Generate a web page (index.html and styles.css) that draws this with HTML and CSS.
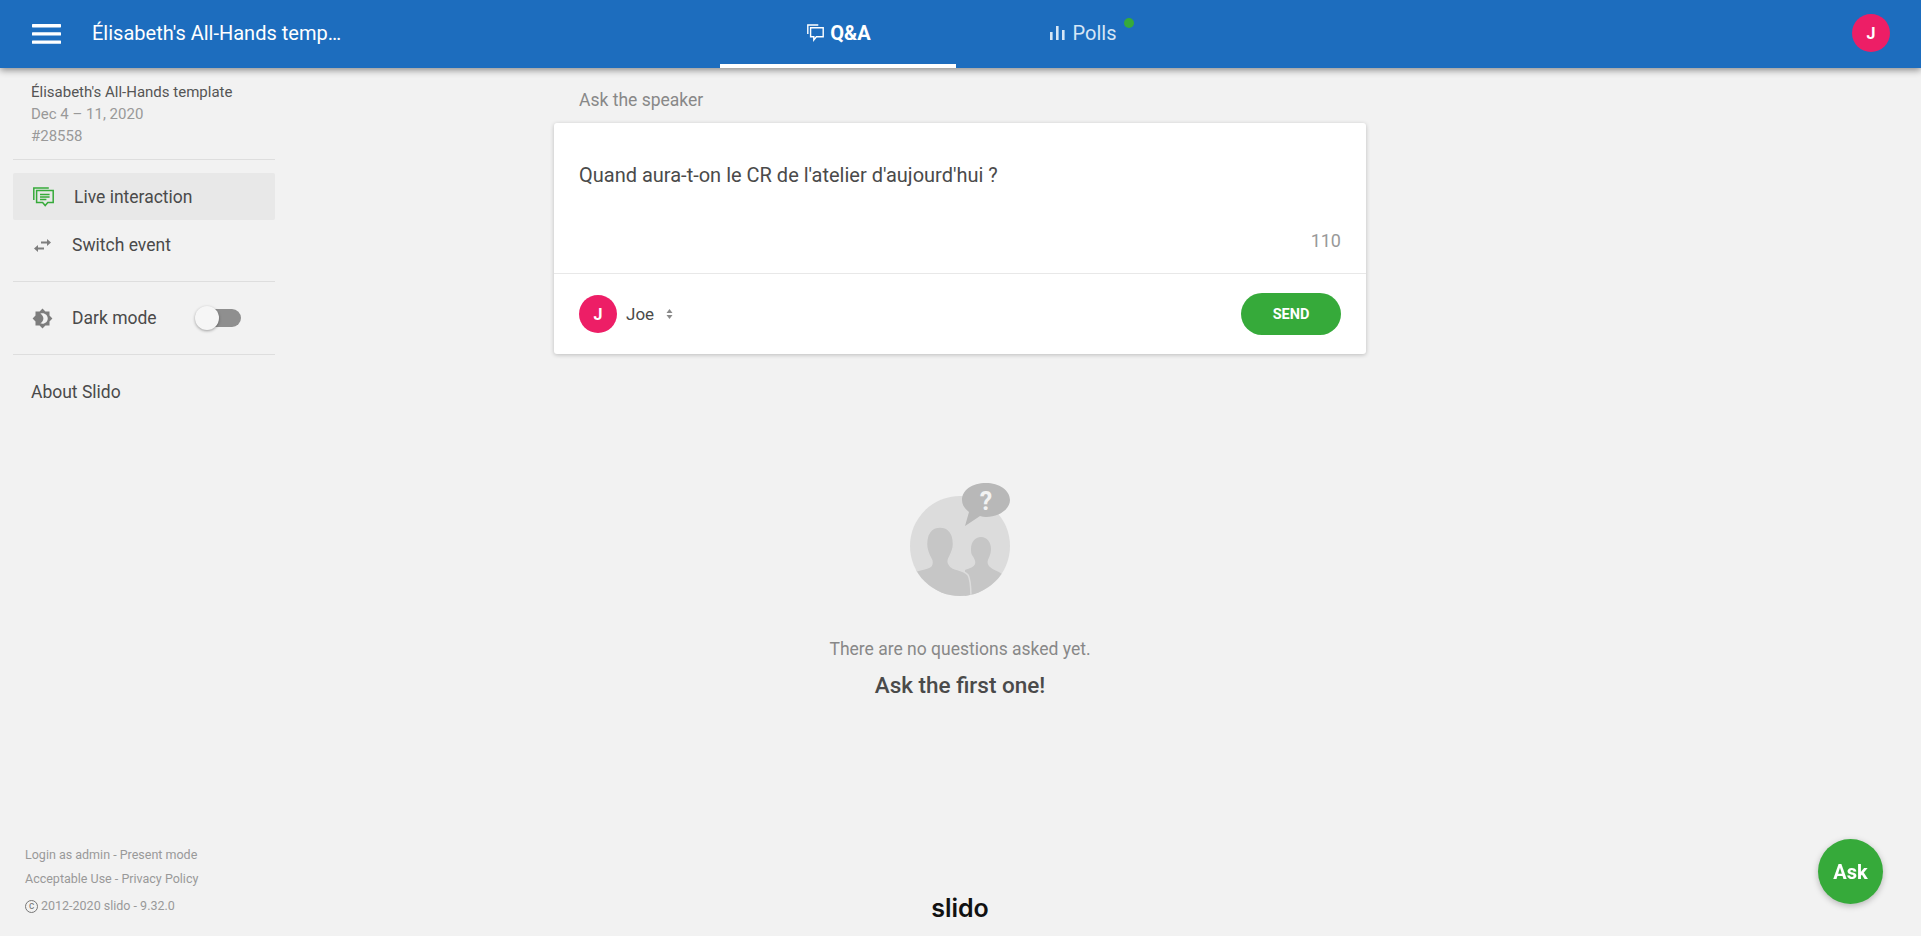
FILE: index.html
```html
<!DOCTYPE html>
<html lang="en">
<head>
  <meta charset="UTF-8">
  <meta name="viewport" content="width=device-width, initial-scale=1.0">
  <title>Slido</title>
  <link rel="stylesheet" href="styles.css">
</head>
<body>
  <header class="topbar">
    <div class="topbar-left">
      <svg class="menu-icon" width="29" height="20" viewBox="0 0 29 20"><rect width="29" height="3.4" rx="0.6"/><rect y="8.2" width="29" height="3.4" rx="0.6"/><rect y="16.4" width="29" height="3.4" rx="0.6"/></svg>
      <span class="event-title">Élisabeth's All-Hands temp…</span>
    </div>
    <nav class="tabs">
      <a class="tab tab-active">
        <svg width="17" height="18" viewBox="0 0 17 18" fill="none" stroke="#fff" stroke-width="1.4"><path d="M.8 10V1h10.5"/><path d="M3.6 3.8h12.6v9H9.4l-2.600 3.200v-3.200H3.600z"/></svg>
        Q&amp;A
      </a>
      <a class="tab tab-polls">
        <svg width="15" height="14" viewBox="0 0 15 14" fill="#d6e6f6"><rect y="6" width="2.6" height="8"/><rect x="6" width="2.6" height="14"/><rect x="12" y="4" width="2.6" height="10"/></svg>
        Polls
        <span class="tab-dot"></span>
      </a>
    </nav>
    <div class="avatar avatar-top">J</div>
  </header>

  <div class="page">
    <aside class="sidebar">
      <div class="event-info">
        <div class="event-name">Élisabeth's All-Hands template</div>
        <div>Dec 4 – 11, 2020</div>
        <div>#28558</div>
      </div>
      <div class="side-item side-item-active">
        <svg width="21" height="20" viewBox="0 0 21 20" fill="none" stroke="#36aa3a" stroke-width="1.5"><path d="M.8 13V1h15"/><path d="M3.6 3.6h16.600v12h-5.400l-2.600 3-2.600-3h-6z"/><path d="M7 7.400h9.600M7 10h9.600M7 12.600h6.400"/></svg>
        Live interaction
      </div>
      <div class="side-item">
        <svg width="17" height="13" viewBox="0 0 17 13" fill="#7d7d7d"><path d="M7 2.500h6V0l4 3.500-4 3.500V4.500H7z"/><path d="M10 8.500H4V6l-4 3.500L4 13v-2.500h6z"/></svg>
        Switch event
      </div>
      <div class="side-row">
        <svg width="21" height="21" viewBox="0 0 24 24" fill="#7d7d7d"><path d="M20 8.690V4h-4.690L12 .69 8.690 4H4v4.690L.69 12 4 15.310V20h4.690L12 23.310 15.310 20H20v-4.690L23.310 12 20 8.690zM12 18c-.89 0-1.740-.2-2.500-.55C11.560 16.500 13 14.420 13 12s-1.440-4.500-3.500-5.450C10.260 6.200 11.110 6 12 6c3.310 0 6 2.690 6 6s-2.690 6-6 6z"/></svg>
        <span>Dark mode</span>
        <span class="toggle"><span class="toggle-knob"></span></span>
      </div>
      <div class="side-about">About Slido</div>
      <footer class="side-footer">
        <div>Login as admin - Present mode</div>
        <div>Acceptable Use - Privacy Policy</div>
        <div class="copyright"><span class="copy-mark">c</span>2012-2020 slido - 9.32.0</div>
      </footer>
    </aside>

    <main class="content">
      <div class="ask-label">Ask the speaker</div>
      <section class="ask-card">
        <div class="ask-body">
          <div class="ask-text">Quand aura-t-on le CR de l'atelier d'aujourd'hui ?</div>
          <div class="ask-count">110</div>
        </div>
        <div class="ask-foot">
          <div class="avatar">J</div>
          <span class="ask-user">Joe</span>
          <svg class="sort-icon" width="7" height="10" viewBox="0 0 7 10" fill="#8a8a8a"><path d="M3.500 0l3 4h-6zM3.500 10l-3-4h6z"/></svg>
          <button class="send-btn">SEND</button>
        </div>
      </section>

      <svg class="empty-art" width="120" height="120" viewBox="20 16 120 120">
        <defs><clipPath id="disc"><circle cx="80" cy="86" r="50"/></clipPath></defs>
        <circle cx="80" cy="86" r="50" fill="#dcdcdc"/>
        <g clip-path="url(#disc)" fill="#c6c6c6">
          <path d="M101 77C107 77 111 82 111 89C111 94 109 97 108 100C107 103 108 105 110 107C113 110 118 111 122 114L122 140L85 140L85 110C90 108 94 107 95 104C96 101 94 98 92 95C91 93 91 91 91 89C91 82 95 77 101 77Z"/>
          <path stroke="#dcdcdc" stroke-width="1.5" d="M60 67C69 67 73.500 74 73.500 84C73.500 90 71 94 69 98C67 102 69 106 73 108C78 110 85 111 88 115C90 118 91 125 91 140L30 140L30 113C36 110 48 109 51 106C53 103 52 100 50 97C48 93 46.500 90 46.500 84C46.500 74 51 67 60 67Z"/>
        </g>
        <path d="M106 23C92 23 82 30 82 40C82 45 85 49 89 52L85 66L100 56C102 56.500 104 57 106 57C119 57 130 49 130 40C130 30 119 23 106 23Z" fill="#b8b8b8"/>
        <text class="empty-q" x="106" y="50" text-anchor="middle">?</text>
      </svg>
      <p class="empty-line">There are no questions asked yet.</p>
      <p class="empty-cta">Ask the first one!</p>

      <div class="brand">slido</div>
    </main>
  </div>

  <button class="fab">Ask</button>
</body>
</html>
```

FILE: styles.css
```css
* {
  margin: 0;
  padding: 0;
  box-sizing: border-box;
}
html, body {
  height: 100%;
  overflow: hidden;
}
body {
  font-family: Roboto, "Liberation Sans", sans-serif;
  background: #f2f2f2;
  color: #4a4a4a;
  display: flex;
  flex-direction: column;
}
.topbar {
  flex: none;
  height: 68px;
  display: flex;
  align-items: stretch;
  background: #1d6dbe;
  box-shadow: 0 2px 7px rgba(0, 0, 0, 0.45);
  color: #fff;
  position: relative;
  z-index: 2;
}
.topbar-left {
  width: 720px;
  display: flex;
  align-items: center;
  padding-left: 32px;
}
.menu-icon {
  fill: #fff;
  flex: none;
}
.event-title {
  margin-left: 31px;
  font-size: 20px;
  line-height: 28px;
  margin-top: -2px;
}
.tabs {
  display: flex;
}
.tab {
  position: relative;
  width: 236px;
  display: flex;
  align-items: center;
  justify-content: center;
  gap: 6px;
  font-size: 20px;
  padding-bottom: 2px;
  color: #d6e6f6;
}
.tab-active {
  color: #fff;
  font-weight: 700;
  border-bottom: 4px solid #fff;
  padding: 1px 0 0 2px;
}
.tab-polls {
  width: 254px;
  gap: 8px;
}
.tab-dot {
  position: absolute;
  left: 168px;
  top: 18px;
  width: 10px;
  height: 10px;
  border-radius: 50%;
  background: #36aa3a;
}
.avatar {
  flex: none;
  width: 38px;
  height: 38px;
  border-radius: 50%;
  background: #ed1e66;
  color: #fff;
  display: flex;
  align-items: center;
  justify-content: center;
  font-size: 16px;
  font-weight: 700;
}
.avatar-top {
  align-self: center;
  margin-left: auto;
  margin-right: 31px;
  margin-top: -2px;
}

.page {
  flex: 1;
  min-height: 0;
  display: grid;
  grid-template-columns: 275px 1fr 276px;
}
.sidebar {
  padding-left: 13px;
  display: flex;
  flex-direction: column;
  font-size: 17.5px;
}
.event-info {
  padding: 13px 0 12px 18px;
  font-size: 15px;
  line-height: 22px;
  color: #999;
  border-bottom: 1px solid #dedede;
  margin-bottom: 13px;
}
.event-name {
  color: #555;
}
.side-item {
  height: 48px;
  padding-left: 21px;
  padding-top: 2px;
  display: flex;
  align-items: center;
  gap: 21px;
}
.side-item-active {
  height: 47px;
  padding-left: 20px;
  padding-top: 1px;
  gap: 20px;
  background: #e8e8e8;
  border-radius: 2px;
}
.side-row {
  height: 74px;
  margin-top: 13px;
  padding-left: 19px;
  display: flex;
  align-items: center;
  gap: 19px;
  border-top: 1px solid #dedede;
  border-bottom: 1px solid #dedede;
}
.toggle {
  position: relative;
  width: 44px;
  height: 18px;
  margin-left: 21px;
  border-radius: 9px;
  background: #8f8f8f;
}
.toggle-knob {
  position: absolute;
  left: -2px;
  top: -3px;
  width: 24px;
  height: 24px;
  border-radius: 50%;
  background: #f6f6f6;
  box-shadow: 0 1px 3px rgba(0, 0, 0, 0.35);
}
.side-about {
  padding: 25px 0 0 18px;
  line-height: 24px;
}
.side-footer {
  margin-top: auto;
  margin-left: -13px;
  padding: 0 0 18px 25px;
  font-size: 12.5px;
  line-height: 24px;
  color: #999;
}
.copyright {
  margin-top: 3px;
  display: flex;
  align-items: center;
  gap: 3px;
}
.copy-mark {
  width: 13px;
  height: 13px;
  border: 1px solid #777;
  border-radius: 50%;
  color: #777;
  font-size: 10px;
  line-height: 10px;
  text-align: center;
}

.content {
  display: flex;
  flex-direction: column;
  align-items: center;
  min-height: 0;
}
.ask-label {
  width: 812px;
  margin-top: 20px;
  margin-bottom: 11px;
  padding-left: 25px;
  font-size: 17.5px;
  line-height: 24px;
  color: #888;
}
.ask-card {
  width: 812px;
  background: #fff;
  border-radius: 3px;
  box-shadow: 0 1px 4px rgba(0, 0, 0, 0.22);
}
.ask-body {
  height: 150px;
  padding: 40px 25px 20px;
  display: flex;
  flex-direction: column;
  font-size: 20px;
  line-height: 24px;
}
.ask-count {
  margin-top: auto;
  font-size: 18px;
  text-align: right;
  color: #999;
}
.ask-foot {
  height: 81px;
  padding: 0 25px;
  display: flex;
  align-items: center;
  border-top: 1px solid #e8e8e8;
}
.ask-user {
  margin-left: 9px;
  font-size: 17px;
}
.sort-icon {
  margin-left: 12px;
}
.send-btn {
  margin-left: auto;
  width: 100px;
  height: 42px;
  border: none;
  border-radius: 21px;
  background: #36aa3a;
  color: #fff;
  font-family: inherit;
  font-size: 14.5px;
  font-weight: 700;
}
.empty-art {
  margin-top: 122px;
  flex: none;
}
.empty-q {
  font-family: Roboto, sans-serif;
  font-size: 25px;
  font-weight: 700;
  fill: #f2f2f2;
}
.empty-line {
  margin-top: 41px;
  font-size: 17.5px;
  line-height: 24px;
  color: #888;
}
.empty-cta {
  margin-top: 9px;
  font-size: 22.5px;
  line-height: 30px;
  font-weight: 500;
}
.brand {
  margin-top: auto;
  margin-bottom: 12px;
  font-family: Inter, sans-serif;
  font-size: 25px;
  line-height: 32px;
  font-weight: 600;
  color: #111;
}
.fab {
  position: fixed;
  left: 1818px;
  top: 839px;
  width: 65px;
  height: 65px;
  border: none;
  border-radius: 50%;
  background: #36aa3a;
  color: #fff;
  font-family: inherit;
  font-size: 20px;
  font-weight: 700;
  box-shadow: 0 2px 6px rgba(0, 0, 0, 0.25);
}
```
